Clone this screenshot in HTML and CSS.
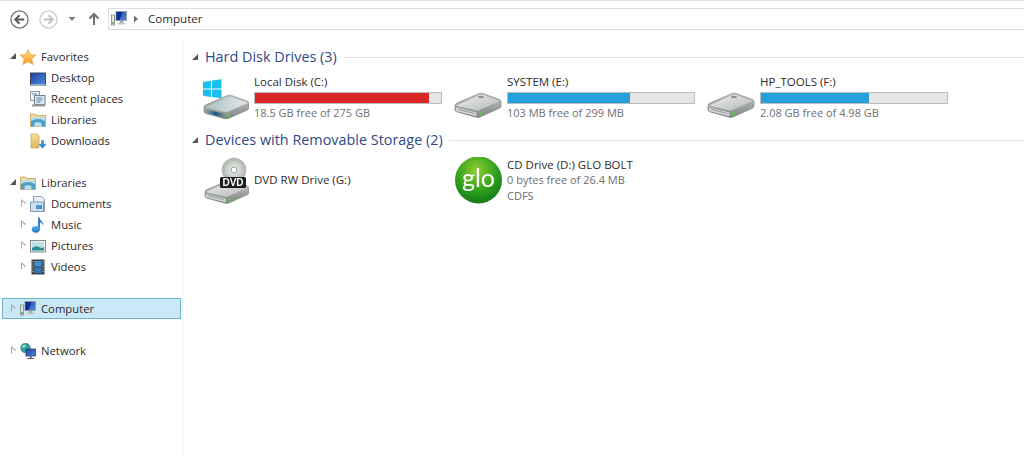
FILE: index.html
```html
<!DOCTYPE html>
<html lang="en">
<head>
<meta charset="utf-8">
<title>Computer</title>
<link rel="stylesheet" href="styles.css">
</head>
<body>
<svg class="defs" aria-hidden="true">
  <defs>
    <linearGradient id="gStar" x1="0" y1="0" x2="0" y2="1"><stop offset="0" stop-color="#ffe07a"/><stop offset="1" stop-color="#f59a26"/></linearGradient>
    <linearGradient id="gScreen" x1="0" y1="0" x2="1" y2="1"><stop offset="0" stop-color="#1c3f9e"/><stop offset="1" stop-color="#4f8fe0"/></linearGradient>
    <linearGradient id="gFolder" x1="0" y1="0" x2="0" y2="1"><stop offset="0" stop-color="#f7e29a"/><stop offset="1" stop-color="#d9b75c"/></linearGradient>
    <linearGradient id="gBlue" x1="0" y1="0" x2="0" y2="1"><stop offset="0" stop-color="#5fb3e6"/><stop offset="1" stop-color="#1a6fc0"/></linearGradient>
    <linearGradient id="gTop" x1="0" y1="0" x2="1" y2="1"><stop offset="0" stop-color="#f0f1f1"/><stop offset="1" stop-color="#b4b7b7"/></linearGradient>
    <linearGradient id="gSide" x1="0" y1="0" x2="0" y2="1"><stop offset="0" stop-color="#c9cbcb"/><stop offset="1" stop-color="#808383"/></linearGradient>
    <linearGradient id="gTeal" x1="0" y1="0" x2="1" y2="0"><stop offset="0" stop-color="#aebfc0"/><stop offset="1" stop-color="#e4e8e8"/></linearGradient>
    <linearGradient id="gFront" x1="0" y1="0" x2="1" y2="0"><stop offset="0" stop-color="#8fb0b6"/><stop offset="0.55" stop-color="#17557f"/><stop offset="1" stop-color="#8a8f8f"/></linearGradient>
    <radialGradient id="gGlo" cx="0.45" cy="0.3" r="0.8"><stop offset="0" stop-color="#8fcf2e"/><stop offset="0.55" stop-color="#2f9e1e"/><stop offset="1" stop-color="#0b6f16"/></radialGradient>
    <radialGradient id="gDisc" cx="0.5" cy="0.5" r="0.6"><stop offset="0" stop-color="#f2f2f2"/><stop offset="0.6" stop-color="#c2c7c2"/><stop offset="1" stop-color="#9aa49a"/></radialGradient>
    <symbol id="i-star" viewBox="0 0 16 16"><polygon points="8,0.5 10.3,5.6 15.8,6.2 11.7,9.9 12.9,15.4 8,12.6 3.1,15.4 4.3,9.9 0.2,6.2 5.7,5.6" fill="url(#gStar)" stroke="#e09a38" stroke-width=".7"/></symbol>
    <symbol id="i-desktop" viewBox="0 0 16 16"><rect x="0.5" y="3" width="15" height="12" fill="url(#gScreen)" stroke="#3d4a5e"/><rect x="1" y="14" width="14" height="1.5" fill="#9ab0c8"/></symbol>
    <symbol id="i-recent" viewBox="0 0 16 16"><rect x="0.5" y="0.5" width="9" height="9" fill="#eef3f6" stroke="#8a9aa6"/><rect x="4.5" y="4.5" width="10.5" height="9" fill="#dfe8ee" stroke="#6f8292"/><path d="M6.5 7h6M6.5 9h6M6.5 11h4M2 3h5" stroke="#5f87ad"/><rect x="2" y="13.5" width="13" height="2" fill="#9c9c94"/></symbol>
    <symbol id="i-lib" viewBox="0 0 16 16"><path d="M0.5 14.5V2h5l1 1.5h9v11z" fill="url(#gFolder)" stroke="#bfa25a" stroke-width=".8"/><rect x="1" y="5" width="14" height="9.5" fill="#bcdff0"/><path d="M1 14.5V9q7-4 14 0v5.500h-3.500V11q-3.500-1.500-7 0v3.500z" fill="#4f9fcb"/></symbol>
    <symbol id="i-down" viewBox="0 0 16 16"><path d="M1 15V1h6l1 1.500h1V15z" fill="url(#gFolder)" stroke="#c9a95a" stroke-width=".8"/><path d="M11 7h3v4h2.500l-4 4.500-4-4.500H11z" fill="url(#gBlue)"/></symbol>
    <symbol id="i-doc" viewBox="0 0 16 16"><path d="M3.500 0.500h8l3 3V15.500H3.500z" fill="#e9eff5" stroke="#8b9db0"/><path d="M0.500 6h13v9.500H0.500z" fill="#cfe0ef" stroke="#7e9bb8"/><rect x="6" y="9" width="6" height="4" fill="#4f94cf"/></symbol>
    <symbol id="i-music" viewBox="0 0 16 16"><path d="M9 0.500v12" stroke="#1e6fb8" stroke-width="1.800" fill="none"/><path d="M9.500 0.500c0 3 4.500 3.500 4 8.500-1-3-2.500-3.800-4-3.800z" fill="#2d86cf"/><ellipse cx="5.800" cy="12.300" rx="4" ry="3.400" fill="url(#gBlue)"/></symbol>
    <symbol id="i-pic" viewBox="0 0 16 16"><rect x="0.500" y="2.500" width="15" height="11.500" fill="#f1f4f5" stroke="#7f8a92"/><rect x="2" y="4" width="12" height="8.500" fill="#bfe0e4"/><path d="M2 10q4-3 7-1t5 0v3.500H2z" fill="#2f8a95"/></symbol>
    <symbol id="i-vid" viewBox="0 0 16 16"><rect x="1.500" y="0.500" width="13" height="15" fill="#3f454c"/><rect x="4.500" y="2" width="7" height="5.500" fill="#3f8fcf"/><rect x="4.500" y="8.500" width="7" height="5.500" fill="#2f78b5"/><path d="M2.300 2.500h1.200M2.300 5h1.200M2.300 7.500h1.200M2.300 10h1.200M2.300 12.500h1.200M12.500 2.500h1.200M12.500 5h1.200M12.500 7.500h1.200M12.500 10h1.200M12.500 12.500h1.200" stroke="#aeb3b8"/></symbol>
    <symbol id="i-pc" viewBox="0 0 16 16"><rect x="0.500" y="4" width="3" height="10" fill="#e4e6e4" stroke="#7f8480" stroke-width=".8"/><rect x="1.200" y="11" width="1.600" height="2" fill="#5fae4a"/><rect x="5" y="0.500" width="10.500" height="9" fill="url(#gScreen)" stroke="#8d96a0" stroke-width=".8"/><path d="M5.500 1h6l-3 8h-3z" fill="#112f8c"/><path d="M9 10h3l.8 2H8.200z" fill="#a9aeb0"/><rect x="6.500" y="12" width="8" height="1.500" fill="#c3c7c8"/></symbol>
    <symbol id="i-net" viewBox="0 0 16 16"><circle cx="5.500" cy="5" r="4.800" fill="#2f9fa8" stroke="#1e6d78" stroke-width=".5"/><path d="M2 3q2-2 4-1l-1 2-2 1zM6 6l3 0-1 3-2-1z" fill="#a3dcb0"/><rect x="6" y="6" width="9.500" height="7" fill="url(#gScreen)" stroke="#2d3d5a" stroke-width=".8"/><path d="M10 13h1.500v2H10zM7.500 15h6.500v1H7.500z" fill="#4a5a70"/></symbol>
    <symbol id="i-drive" viewBox="0 0 48 26"><path d="M1 13.500Q1 12 3 11L25 1.500Q27 .8 29 1.500L45.500 7.500Q47 8.200 47 10v4q0 1.500-2 2.500L26 25q-2 .8-4 .2L3 20q-2-.6-2-2.500z" fill="url(#gSide)" stroke="#7c7f7f" stroke-width=".6"/><path d="M2.500 13 26 2.500q1.500-.5 3 0l16.500 6q1 .6 0 1.200L24.500 18.500q-1 .4-2.500 0L2.500 14q-1-.4 0-1z" fill="url(#gTop)" stroke="#9a9d9d" stroke-width=".4"/><path d="M2 15.500 22.500 20.500v3.800L2 19z" fill="#d4d6d6"/><path d="M4 17.300 20.500 21.500" stroke="#94989a"/><rect x="25" y="19.500" width="2.500" height="4.500" fill="#5cc04c"/><ellipse cx="27" cy="5" rx="3" ry="1.300" fill="#8f9292"/></symbol>
    <symbol id="i-sysdrive" viewBox="0 0 48 26"><path d="M1 13.500Q1 12 3 11L25 1.500Q27 .8 29 1.500L45.500 7.500Q47 8.200 47 10v4q0 1.500-2 2.500L26 25q-2 .8-4 .2L3 20q-2-.6-2-2.500z" fill="url(#gSide)" stroke="#7c7f7f" stroke-width=".6"/><path d="M2.500 13 26 2.500q1.500-.5 3 0l16.500 6q1 .6 0 1.200L24.500 18.500q-1 .4-2.500 0L2.500 14q-1-.4 0-1z" fill="url(#gTeal)" stroke="#9a9d9d" stroke-width=".4"/><path d="M2 15.500 22.500 20.500v3.800L2 19z" fill="url(#gFront)"/><rect x="25" y="19.500" width="2.500" height="4.500" fill="#5cc04c"/></symbol>
  </defs>
</svg>

<header class="toolbar">
  <svg class="nav-btn" viewBox="0 0 20 20"><circle cx="10" cy="10" r="9" fill="#fff" stroke="#6e6e6e" stroke-width="1.300"/><path d="M15 10H6M10 5.500 5.500 10l4.500 4.500" fill="none" stroke="#5a5a5a" stroke-width="2"/></svg>
  <svg class="nav-btn" viewBox="0 0 20 20"><circle cx="10" cy="10" r="9" fill="#fff" stroke="#c9c9c9" stroke-width="1.300"/><path d="M5 10h9M10 5.500l4.500 4.500L10 14.500" fill="none" stroke="#c4c4c4" stroke-width="2"/></svg>
  <svg class="drop" viewBox="0 0 12 8"><path d="M2.500 2h7L6 6z" fill="#7a7a7a"/></svg>
  <svg class="up" viewBox="0 0 12 14"><path d="M6 13V2M1.500 6.500 6 2l4.500 4.500" fill="none" stroke="#707070" stroke-width="2"/></svg>
  <div class="address">
    <svg class="ico"><use href="#i-pc"/></svg>
    <svg class="crumb" viewBox="0 0 6 8"><path d="M1 0.500 5 4 1 7.500z" fill="#6e6e6e"/></svg>
    <span>Computer</span>
  </div>
</header>

<div class="body">
  <nav class="sidebar">
    <div class="row"><i class="tri open"></i><svg class="ico"><use href="#i-star"/></svg><span>Favorites</span></div>
    <div class="row child"><i class="tri none"></i><svg class="ico"><use href="#i-desktop"/></svg><span>Desktop</span></div>
    <div class="row child"><i class="tri none"></i><svg class="ico"><use href="#i-recent"/></svg><span>Recent places</span></div>
    <div class="row child"><i class="tri none"></i><svg class="ico"><use href="#i-lib"/></svg><span>Libraries</span></div>
    <div class="row child"><i class="tri none"></i><svg class="ico"><use href="#i-down"/></svg><span>Downloads</span></div>
    <div class="row blank"></div>
    <div class="row"><i class="tri open"></i><svg class="ico"><use href="#i-lib"/></svg><span>Libraries</span></div>
    <div class="row child"><i class="tri"></i><svg class="ico"><use href="#i-doc"/></svg><span>Documents</span></div>
    <div class="row child"><i class="tri"></i><svg class="ico"><use href="#i-music"/></svg><span>Music</span></div>
    <div class="row child"><i class="tri"></i><svg class="ico"><use href="#i-pic"/></svg><span>Pictures</span></div>
    <div class="row child"><i class="tri"></i><svg class="ico"><use href="#i-vid"/></svg><span>Videos</span></div>
    <div class="row blank"></div>
    <div class="row selected"><i class="tri"></i><svg class="ico"><use href="#i-pc"/></svg><span>Computer</span></div>
    <div class="row blank"></div>
    <div class="row"><i class="tri"></i><svg class="ico"><use href="#i-net"/></svg><span>Network</span></div>
  </nav>

  <main class="content">
    <h2 class="group"><i class="tri open"></i><span>Hard Disk Drives (3)</span><b class="rule"></b></h2>
    <section class="tiles">
      <article class="tile">
        <svg class="big" viewBox="0 0 48 48"><use href="#i-sysdrive" x="2" y="20" width="47" height="25.500"/><g fill="#19c0ec"><path d="M2 8 10 6.800v7.700H2zM11 6.600l9.500-1.400v9.300H11zM2 15.500h8v7.400l-8-1.200zM11 15.500h9.500V24.300L11 23z"/></g></svg>
        <div class="info">
          <div class="name">Local Disk (C:)</div>
          <div class="bar"><div class="fill full" style="width:93.300%"></div></div>
          <div class="sub">18.5 GB free of 275 GB</div>
        </div>
      </article>
      <article class="tile">
        <svg class="big" viewBox="0 0 48 48"><use href="#i-drive" x="0" y="18" width="48" height="26"/></svg>
        <div class="info">
          <div class="name">SYSTEM (E:)</div>
          <div class="bar"><div class="fill" style="width:65.600%"></div></div>
          <div class="sub">103 MB free of 299 MB</div>
        </div>
      </article>
      <article class="tile">
        <svg class="big" viewBox="0 0 48 48"><use href="#i-drive" x="0" y="18" width="48" height="26"/></svg>
        <div class="info">
          <div class="name">HP_TOOLS (F:)</div>
          <div class="bar"><div class="fill" style="width:58.200%"></div></div>
          <div class="sub">2.08 GB free of 4.98 GB</div>
        </div>
      </article>
    </section>
    <h2 class="group"><i class="tri open"></i><span>Devices with Removable Storage (2)</span><b class="rule"></b></h2>
    <section class="tiles">
      <article class="tile">
        <svg class="big" viewBox="0 0 48 48"><use href="#i-drive" x="3" y="22" width="46" height="25"/><circle cx="33" cy="13" r="12" fill="url(#gDisc)" stroke="#aab2aa" stroke-width=".5"/><circle cx="33" cy="13" r="3" fill="#fff" stroke="#9a9f9a"/><rect x="19" y="20" width="26" height="11" rx="1.500" fill="#1c1c1c"/><text class="dvd" x="32" y="29" text-anchor="middle">DVD</text></svg>
        <div class="info center"><div class="name">DVD RW Drive (G:)</div></div>
      </article>
      <article class="tile">
        <svg class="big" viewBox="0 0 48 48"><circle cx="24.500" cy="23" r="23.500" fill="url(#gGlo)"/><text class="glo" x="24.500" y="30" text-anchor="middle">glo</text></svg>
        <div class="info">
          <div class="name">CD Drive (D:) GLO BOLT</div>
          <div class="sub">0 bytes free of 26.4 MB</div>
          <div class="sub">CDFS</div>
        </div>
      </article>
    </section>
  </main>
</div>
</body>
</html>
```

FILE: styles.css
```css
* { box-sizing: border-box; }
html, body { margin: 0; height: 100%; }
body {
  width: 1024px;
  height: 456px;
  overflow: hidden;
  background: #fff;
  color: #2b2b2b;
  font: 11.300px/16px "Open Sans", "Noto Sans", sans-serif;
  display: flex;
  flex-direction: column;
}
.defs { display: block; width: 0; height: 0; overflow: hidden; }
.toolbar {
  flex: none;
  height: 37px;
  border-top: 1px solid #dedede;
  padding: 7px 0 0 10px;
  display: flex;
  align-items: flex-start;
}
.nav-btn { width: 19px; height: 19px; margin: 2px 10px 0 0; flex: none; }
.drop { width: 12px; height: 8px; margin: 7px 10px 0 -2px; flex: none; }
.up { width: 12px; height: 14px; margin: 4px 8px 0 0; flex: none; }
.address {
  flex: 1;
  height: 22px;
  border: 1px solid #dcdcdc;
  border-right: 0;
  padding-left: 2px;
  display: flex;
  align-items: center;
  font-size: 11.600px;
}
.address span { margin-left: 9px; }
.crumb { width: 6px; height: 8px; margin-left: 6px; }
.ico { width: 16px; height: 16px; flex: none; }
.ico, .big { filter: blur(.25px); }
.body { flex: 1; display: flex; min-height: 0; }
.sidebar {
  flex: none;
  width: 183px;
  padding-top: 9px;
  border-right: 1px solid #f1f1f1;
}
.row {
  height: 21px;
  width: 179px;
  margin-left: 2px;
  padding-left: 6px;
  border: 1px solid transparent;
  display: flex;
  align-items: center;
}
.row.child { padding-left: 16px; }
.row span { margin-left: 5px; white-space: nowrap; }
.row.selected { background: #cbe8f6; border-color: #6fb4cf; }
.tri {
  flex: none;
  width: 11px;
  height: 9px;
  display: block;
  position: relative;
}
.tri::before {
  content: "";
  position: absolute;
  left: 2px;
  top: 0;
  border-style: solid;
  border-width: 4.500px 0 4.500px 5px;
  border-color: transparent transparent transparent #a6a6a6;
}
.tri::after {
  content: "";
  position: absolute;
  left: 3px;
  top: 1.500px;
  border-style: solid;
  border-width: 3px 0 3px 3.200px;
  border-color: transparent transparent transparent #fff;
}
.row.selected .tri::after { border-left-color: #cbe8f6; }
.tri.none::before, .tri.none::after { display: none; }
.tri.open::after { display: none; }
.tri.open::before {
  left: 1px;
  top: 1px;
  border-width: 0 0 6px 6px;
  border-color: transparent transparent #555 transparent;
}
.content { flex: 1; padding: 10px 0 0 7px; min-width: 0; }
.group {
  height: 20px;
  margin: 0 0 7px;
  padding-left: 1px;
  display: flex;
  align-items: center;
  font: 400 14.400px/20px "Open Sans", "Noto Sans", sans-serif;
  color: #2f4a86;
}
.group .tri { width: 14px; }
.group span { white-space: nowrap; }
.rule { flex: 1; height: 1px; background: #e4e4e4; margin-left: 6px; }
.tiles { display: flex; margin: 0 0 8px 11px; height: 48px; }
.tile { width: 253px; height: 48px; display: flex; flex: none; }
.big { width: 48px; height: 48px; flex: none; margin-right: 5px; }
.info { width: 188px; }
.info.center { display: flex; align-items: center; padding-bottom: 2px; }
.name { height: 16px; white-space: nowrap; font-size: 11.500px; }
.sub { height: 16px; line-height: 14px; color: #6f6f6f; white-space: nowrap; font-size: 11px; }
.bar {
  height: 12px;
  margin: 2px 0;
  border: 1px solid #bcbcbc;
  background: #e6e6e6;
}
.fill { height: 100%; background: #26a0da; }
.fill.full { background: #da2626; }
.dvd { font: 700 10px "Liberation Sans", sans-serif; fill: #fff; }
.glo { font: 400 25px "Lato", sans-serif; fill: #fff; }
```
